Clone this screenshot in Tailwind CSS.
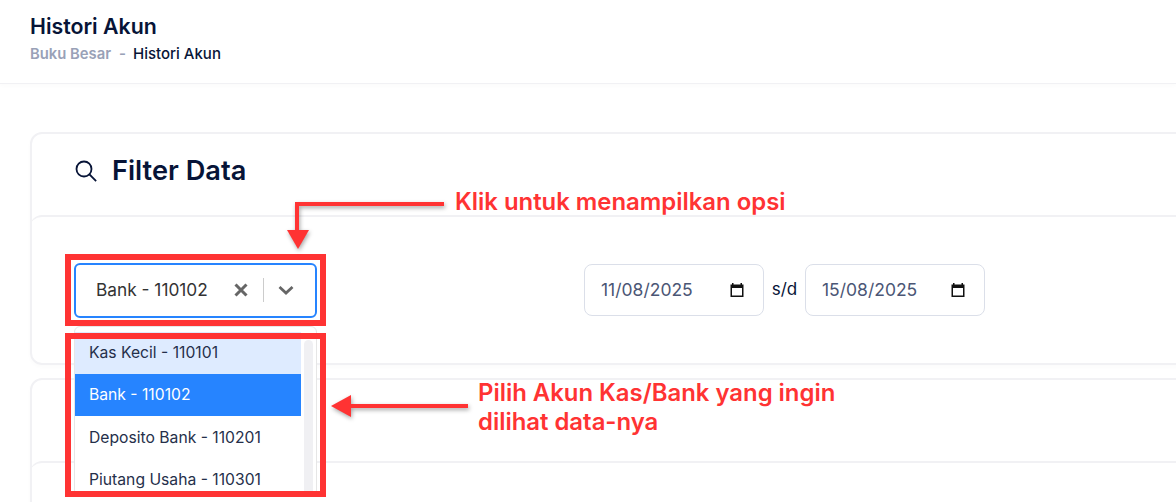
<!DOCTYPE html>
<html>
<head>
<meta charset="utf-8">
<script src="https://cdn.jsdelivr.net/npm/@tailwindcss/browser@4"></script>
</head>
<body class="font-['Inter',sans-serif] bg-white">
<div class="relative w-[1176px] h-[502px] overflow-hidden bg-white">
  <header class="h-[84px] border-b border-[#f1f1f4] shadow-[0_2px_4px_rgba(0,0,0,0.02)] pl-[30px] pt-[13px]">
    <h1 class="text-[21.3px] leading-[27px] font-semibold text-[#071437]">Histori Akun</h1>
    <div class="flex items-center mt-[5px] text-[15px] leading-[18px] font-medium">
      <span class="text-[#99a1b7] font-semibold text-[14.800px]">Buku Besar</span>
      <span class="text-[#99a1b7] font-semibold ml-[8px]">-</span>
      <span class="text-[#071437] ml-[7px]">Histori Akun</span>
    </div>
  </header>

  <main class="ml-[30px] w-[1180px] pt-[48px] flex flex-col gap-[13px]">
    <section class="h-[233px] border-2 border-[#f1f1f4] rounded-[12px] flex flex-col shadow-[0_2px_4px_rgba(0,0,0,0.02)]">
      <div class="h-[81px] flex items-center gap-[15px] pl-[43px] pb-[7px]">
        <svg class="w-[22px] h-[22px]" viewBox="0 0 22 22" fill="none" stroke="#071437" stroke-width="1.800" stroke-linecap="square"><circle cx="9" cy="9" r="7.500"/><path d="M14.500 14.500 20.500 20.500"/></svg>
        <h2 class="text-[27.200px] leading-[34px] font-semibold text-[#071437]">Filter Data</h2>
      </div>
      <div class="flex-1 border-t-2 border-[#f1f1f4] rounded-t-[12px] flex items-start pt-[47px] pl-[554px] -ml-[2px]">
        <div class="w-[180px] h-[52px] border border-[#dbdfe9] rounded-[8px] flex items-center justify-between pl-[16px] pr-[18px] text-[17.500px] text-[#4b5675]">
          <span>11/08/2025</span>
          <svg class="w-[16px] h-[16px]" viewBox="0 0 16 16"><path d="M3 1h1.500v1.500h7V1H13v1.500h1.500V15h-13V2.500H3zM3 6v7.500h10V6z" fill="#111"/></svg>
        </div>
        <span class="w-[41px] h-[52px] flex items-center justify-center text-[17px] text-[#071437]">s/d</span>
        <div class="w-[180px] h-[52px] border border-[#dbdfe9] rounded-[8px] flex items-center justify-between pl-[16px] pr-[18px] text-[17.500px] text-[#4b5675]">
          <span>15/08/2025</span>
          <svg class="w-[16px] h-[16px]" viewBox="0 0 16 16"><path d="M3 1h1.500v1.500h7V1H13v1.500h1.500V15h-13V2.500H3zM3 6v7.500h10V6z" fill="#111"/></svg>
        </div>
      </div>
    </section>
    <section class="h-[200px] border-2 border-[#f1f1f4] rounded-[12px] flex flex-col shadow-[0_2px_4px_rgba(0,0,0,0.02)]">
      <div class="h-[81px]"></div>
      <div class="flex-1 border-t-2 border-[#f1f1f4] rounded-t-[12px] -ml-[2px]"></div>
    </section>
  </main>

  <!-- select control -->
  <div class="absolute left-[74px] top-[263px] w-[243px] h-[55px] border-2 border-[#2684ff] rounded-[6px] bg-white flex items-center pl-[20px] pb-[1px] text-[17.300px] text-[#333333]">
    <span class="w-[130px] whitespace-nowrap">Bank - 110102</span>
    <svg class="w-[20px] h-[20px] ml-[5px]" viewBox="0 0 20 20"><path d="M4.500 4.500 15.500 15.500M15.500 4.500 4.500 15.500" stroke="#666" stroke-width="3"/></svg>
    <span class="w-px h-[24px] bg-[#cccccc] ml-[12px]"></span>
    <svg class="w-[20px] h-[20px] ml-[12px]" viewBox="0 0 20 20" fill="none"><path d="M3.500 7 10 13 16.500 7" stroke="#666" stroke-width="2.800"/></svg>
  </div>

  <!-- dropdown menu -->
  <div class="absolute left-[74px] top-[326px] w-[243px] h-[170px] bg-white border border-[#e6e6e6] rounded-[6px] overflow-hidden text-[15.700px] text-[#252f4a]">
    <div class="flex h-full pt-[5px]">
      <ul class="w-[226px]">
        <li class="h-[42px] pl-[14px] flex items-center bg-[#deebff]">Kas Kecil - 110101</li>
        <li class="h-[42px] pl-[14px] flex items-center bg-[#2684ff] text-white">Bank - 110102</li>
        <li class="h-[42px] pl-[14px] pt-[1px] flex items-center">Deposito Bank - 110201</li>
        <li class="h-[42px] pl-[14px] pt-[1px] flex items-center">Piutang Usaha - 110301</li>
      </ul>
      <div class="w-[9px] ml-[3px] mt-[8px] h-[170px] rounded-full bg-[#f0f0f3]"></div>
    </div>
  </div>

  <!-- annotation boxes -->
  <div class="absolute left-[65px] top-[254px] w-[261px] h-[72px] border-[6px] border-[#ff3333]"></div>
  <div class="absolute left-[65px] top-[333px] w-[261px] h-[164px] border-[6px] border-[#ff3333]"></div>

  <!-- annotation arrows -->
  <svg class="absolute left-0 top-0 w-[1176px] h-[502px] pointer-events-none drop-shadow-[1px_2px_2px_rgba(0,0,0,0.35)]" viewBox="0 0 1176 502" fill="none">
    <path d="M444 204H297V232" stroke="#ff3333" stroke-width="4"/>
    <path d="M287 230H309L298 249Z" fill="#ff3333"/>
    <path d="M468 406H350" stroke="#ff3333" stroke-width="4"/>
    <path d="M351 395V417L331 406Z" fill="#ff3333"/>
  </svg>

  <p class="absolute left-[455px] top-[187px] text-[23.900px] leading-[30px] font-semibold text-[#ff3333] whitespace-nowrap">Klik untuk menampilkan opsi</p>
  <p class="absolute left-[478px] top-[378px] text-[23.900px] leading-[29px] font-semibold text-[#ff3333] whitespace-nowrap">Pilih Akun Kas/Bank yang ingin<br>dilihat data-nya</p>
</div>
</body>
</html>
